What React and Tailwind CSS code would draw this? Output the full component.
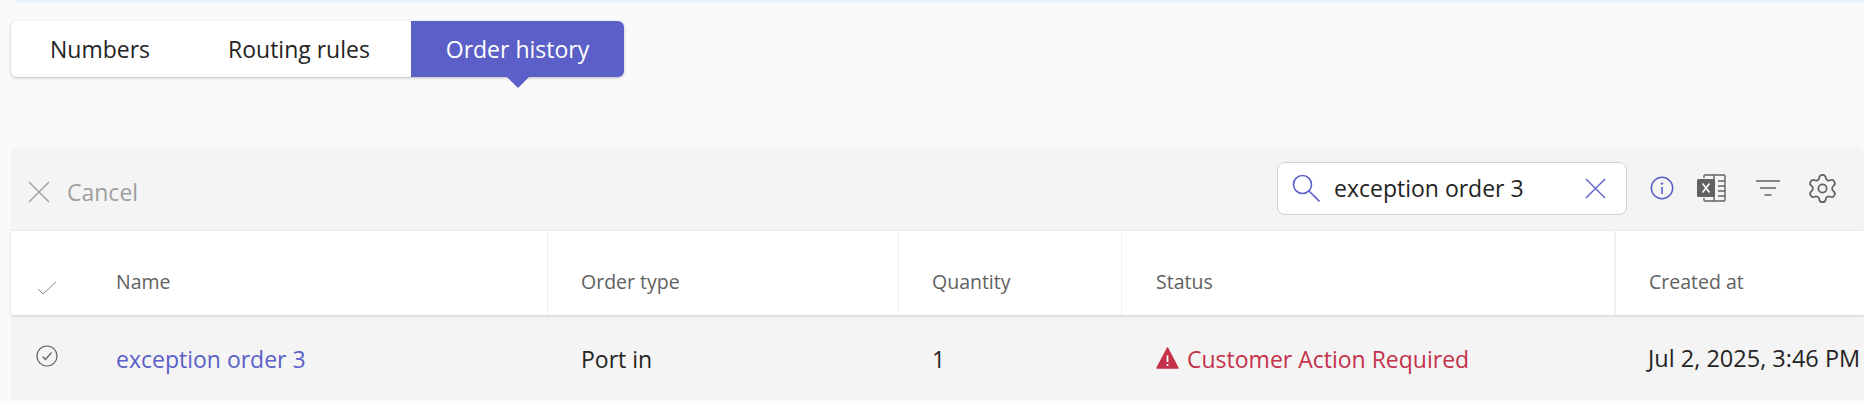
import { Settings } from 'lucide-react';

const font = { fontFamily: '"Open Sans", "Noto Sans", sans-serif' };

function CloseIcon({ className }) {
  return (
    <svg viewBox="0 0 22 22" fill="none" stroke="currentColor" strokeWidth="1.4" className={className}>
      <path d="M1 1l20 20M21 1L1 21" />
    </svg>
  );
}

function SearchIcon() {
  return (
    <svg viewBox="0 0 28 28" fill="none" stroke="#5b5fc7" strokeWidth="1.6" className="w-7 h-7 shrink-0">
      <circle cx="10.5" cy="10.5" r="9" />
      <path d="M17 17l10.5 10.5" />
    </svg>
  );
}

function InfoIcon() {
  return (
    <svg viewBox="0 0 24 24" fill="none" className="w-6 h-6 shrink-0">
      <circle cx="12" cy="12" r="10.7" stroke="#5b5fc7" strokeWidth="1.5" />
      <circle cx="12" cy="7.6" r="1.2" fill="#5b5fc7" />
      <path d="M12 11v7" stroke="#5b5fc7" strokeWidth="1.6" />
    </svg>
  );
}

function ExcelIcon() {
  return (
    <svg viewBox="0 0 29 28" fill="none" className="w-[29px] h-7 shrink-0">
      <path d="M7 4V2a1 1 0 0 1 1-1h19a1 1 0 0 1 1 1v24a1 1 0 0 1-1 1H8a1 1 0 0 1-1-1v-2" stroke="#616161" strokeWidth="1.4" />
      <path d="M17 1v5M17 22v5M21 7h7M21 12h7M21 17h7M21 22h7" stroke="#616161" strokeWidth="1.4" />
      <rect x="0" y="5" width="18" height="18" rx="1.5" fill="#616161" />
      <path d="M5.5 9.5l7 9M12.5 9.5l-7 9" stroke="#fff" strokeWidth="1.6" />
    </svg>
  );
}

function FilterIcon() {
  return (
    <svg viewBox="0 0 24 16" fill="none" stroke="#616161" strokeWidth="1.5" className="w-6 h-4 shrink-0">
      <path d="M0 1h24M4 8h16M8.5 15h7" />
    </svg>
  );
}

function WarningIcon() {
  return (
    <svg viewBox="0 0 23 22" className="w-[23px] h-[22px] shrink-0">
      <path d="M11.5 1L22 21H1z" fill="#c4314b" stroke="#c4314b" strokeWidth="1.5" strokeLinejoin="round" />
      <path d="M11.5 8.5v6.5" stroke="#fff" strokeWidth="1.8" />
      <circle cx="11.5" cy="18" r="1.1" fill="#fff" />
    </svg>
  );
}

function Tabs() {
  return (
    <div className="flex w-[613px] h-14 bg-white rounded-md shadow-[0_1px_3px_rgba(0,0,0,0.25)]">
      <div className="w-[217px] flex items-center pl-[39px] text-[#242424]">Numbers</div>
      <div className="w-[183px] flex items-center text-[#242424]">Routing rules</div>
      <div className="relative w-[213px] flex items-center justify-center bg-[#5b5fc7] text-white rounded-r-md">
        Order history
        <span className="absolute top-full left-1/2 -ml-[11px] border-x-[11px] border-x-transparent border-t-[11px] border-t-[#5b5fc7]" />
      </div>
    </div>
  );
}

function Toolbar() {
  return (
    <div className="flex items-center justify-between h-[84px] bg-[#f4f4f4] rounded-t-md pl-[17px] pr-[25px]">
      <div className="flex items-center gap-[17px] pt-[6px] text-[#9e9e9e] text-[23px]">
        <CloseIcon className="w-[22px] h-[22px]" />
        <span>Cancel</span>
      </div>
      <div className="flex items-center -mt-[2px]">
        <div className="flex items-center w-[350px] h-[53px] bg-white border border-[#d1d1d1] rounded-lg pl-[14px] pr-[20px] text-[23px] text-[#242424]">
          <SearchIcon />
          <span className="ml-[14px] flex-1">exception order 3</span>
          <CloseIcon className="w-[21px] h-[21px] text-[#5b5fc7]" />
        </div>
        <div className="ml-[23px]"><InfoIcon /></div>
        <div className="ml-[23px]"><ExcelIcon /></div>
        <div className="ml-[30px]"><FilterIcon /></div>
        <div className="ml-[26px] text-[#616161]"><Settings size={33} strokeWidth={1.25} /></div>
      </div>
    </div>
  );
}

const rowGrid = 'grid grid-cols-[536px_351px_223px_493px_1fr]';

function Table() {
  return (
    <div>
      <div className={`${rowGrid} relative z-10 h-[84px] bg-white shadow-[0_1px_3px_rgba(0,0,0,0.15)] text-[19.5px] text-[#616161]`}>
        <div className="flex items-center pl-[26px]">
          <svg viewBox="0 0 20 14" fill="none" stroke="#8a8a8a" strokeWidth="1" className="w-5 h-[14px] mt-[30px]">
            <path d="M1 8l5 5L19 1" />
          </svg>
          <span className="ml-[59px] mt-[17px]">Name</span>
        </div>
        <div className="flex items-center pl-[33px] pt-[17px] border-l border-[#f0f0f0]">Order type</div>
        <div className="flex items-center pl-[33px] pt-[17px] border-l border-[#f0f0f0]">Quantity</div>
        <div className="flex items-center pl-[34px] pt-[17px] border-l border-[#f0f0f0]">Status</div>
        <div className="flex items-center pl-[33px] pt-[17px] border-l-2 border-[#f0f0f0]">Created at</div>
      </div>
      <div className={`${rowGrid} h-[85px] bg-[#f4f4f4] text-[23px] text-[#242424]`}>
        <div className="flex items-center pl-[25px]">
          <svg viewBox="0 0 22 22" fill="none" stroke="#616161" strokeWidth="1.2" className="w-[22px] h-[22px] -mt-[4px]">
            <circle cx="11" cy="11" r="10" />
            <path d="M6.5 11.5l3 3 6-7" />
          </svg>
          <span className="ml-[58px] mt-[3px] text-[#5b5fc7]">exception order 3</span>
        </div>
        <div className="flex items-center pl-[34px] pt-[3px]">Port in</div>
        <div className="flex items-center pl-[34px] pt-[3px]">1</div>
        <div className="flex items-center gap-[8px] pl-[35px] pt-[1px] text-[#c4314b]">
          <WarningIcon />
          <span className="mt-[3px]">Customer Action Required</span>
        </div>
        <div className="flex items-center pl-[34px] pt-[3px] text-[23.5px] whitespace-nowrap">Jul 2, 2025, 3:46 PM</div>
      </div>
    </div>
  );
}

export default function App() {
  return (
    <div className="w-[1864px] h-[403px] overflow-hidden bg-[#fafafa]" style={font}>
      <div className="h-[3px] ml-[16px] bg-[#ebf3fc] rounded-bl-md" />
      <div className="pl-[11px] pt-[18px] text-[23px]">
        <Tabs />
        <div className="mt-[70px]">
          <Toolbar />
          <Table />
        </div>
      </div>
    </div>
  );
}
